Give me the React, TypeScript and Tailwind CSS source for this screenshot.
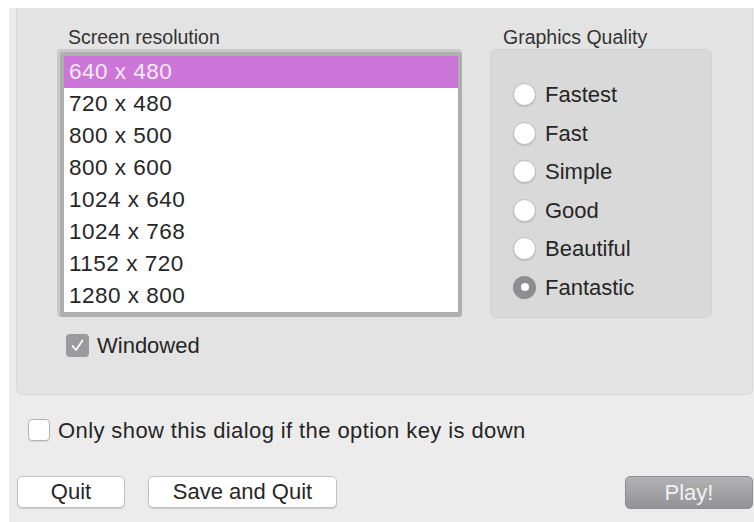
import { useState } from "react";

const resolutions = [
  "640 x 480",
  "720 x 480",
  "800 x 500",
  "800 x 600",
  "1024 x 640",
  "1024 x 768",
  "1152 x 720",
  "1280 x 800",
];

const qualities = ["Fastest", "Fast", "Simple", "Good", "Beautiful", "Fantastic"];

function Radio({ checked }: { checked: boolean }) {
  if (checked) {
    return (
      <span className="flex h-[23px] w-[23px] items-center justify-center rounded-full bg-[#8e8e90]">
        <span className="h-[8px] w-[8px] rounded-full bg-white" />
      </span>
    );
  }
  return (
    <span className="h-[23px] w-[23px] rounded-full border border-[#b9b9b9] bg-white shadow-[0_1px_1px_rgba(0,0,0,0.12)]" />
  );
}

export default function App() {
  const [selected, setSelected] = useState(0);
  const [quality, setQuality] = useState(5);
  const [windowed, setWindowed] = useState(true);
  const [optionOnly, setOptionOnly] = useState(false);

  return (
    <div className="min-h-[522px] bg-white pl-[9px] pt-[8px] font-['Liberation_Sans',Arial,sans-serif] text-[#262626]">
      <div className="flex h-[514px] flex-col bg-[#ececec]">
        <div className="ml-[7px] mr-[1px] flex h-[387px] gap-[28px] rounded-b-[6px] border border-t-0 border-[#d9d9d9] bg-[#e3e3e3] pl-[40px]">
          <div data-element="resolution" className="flex w-[405px] flex-col">
            <div className="h-[41px] pl-[11px] pt-[18px] text-[19.5px] leading-[22px] text-[#333]">
              Screen resolution
            </div>
            <div className="rounded-[4px] bg-[#c9c9c9] pl-[3px] pt-[3px]">
              <div className="rounded-[3px] bg-[#afafaf] pb-[5px] pl-[4px] pr-[4px] pt-[4px]">
                <ul className="bg-white">
                  {resolutions.map((r, i) => (
                    <li
                      key={r}
                      onClick={() => setSelected(i)}
                      className={
                        i === selected
                          ? "h-[32px] bg-[#cb76d8] pl-[5px] text-[22.5px] leading-[32px] tracking-[0.5px] text-[#f7ebf8]"
                          : "h-[32px] pl-[5px] text-[22.5px] leading-[32px] tracking-[0.5px]"
                      }
                    >
                      {r}
                    </li>
                  ))}
                </ul>
              </div>
            </div>
            <label
              className="mt-[17px] flex h-[23px] items-center gap-[8px] pl-[9px] text-[22px]"
              onClick={() => setWindowed(!windowed)}
            >
              {windowed ? (
                <span className="flex h-[23px] w-[23px] items-center justify-center rounded-[4px] bg-[#9b9b9d]">
                  <svg width="15" height="15" viewBox="0 0 15 15" fill="none">
                    <path d="M2.5 8 L6 12 L12.5 2.5" stroke="white" strokeWidth="1.8" strokeLinecap="round" strokeLinejoin="round" />
                  </svg>
                </span>
              ) : (
                <span className="h-[23px] w-[23px] rounded-[4px] border border-[#b5b5b5] bg-white" />
              )}
              Windowed
            </label>
          </div>

          <div data-element="quality" className="flex w-[222px] flex-col">
            <div className="h-[41px] pl-[13px] pt-[18px] text-[19.5px] leading-[22px] text-[#333]">
              Graphics Quality
            </div>
            <div className="flex h-[269px] flex-col gap-[15.5px] rounded-[6px] border border-[#d2d2d2] bg-[#d9d9d9] pl-[22px] pt-[33px]">
              {qualities.map((q, i) => (
                <div
                  key={q}
                  onClick={() => setQuality(i)}
                  className="flex h-[23px] items-center gap-[9px] text-[22px]"
                >
                  <Radio checked={i === quality} />
                  {q}
                </div>
              ))}
            </div>
          </div>
        </div>

        <label
          className="ml-[19px] mt-[24px] flex h-[22px] items-center gap-[8px] text-[22px] tracking-[0.4px]"
          onClick={() => setOptionOnly(!optionOnly)}
        >
          <span className="h-[22px] w-[22px] rounded-[4px] border border-[#b3b3b3] bg-white shadow-[0_1px_1px_rgba(0,0,0,0.08)]" />
          Only show this dialog if the option key is down
        </label>

        <div className="mt-[35px] flex pl-[8px] pr-[1px]">
          <button className="h-[32px] w-[108px] rounded-[5px] border border-[#c3c3c3] bg-white text-[22px] leading-[30px] shadow-[0_1px_1px_rgba(0,0,0,0.15)]">
            Quit
          </button>
          <button className="ml-[23px] h-[32px] w-[189px] rounded-[5px] border border-[#c3c3c3] bg-white text-[22px] leading-[30px] shadow-[0_1px_1px_rgba(0,0,0,0.15)]">
            Save and Quit
          </button>
          <button className="ml-auto h-[33px] w-[128px] rounded-[5px] border border-[#8d8d8f] bg-gradient-to-b from-[#b2b2b4] to-[#939395] text-[22px] leading-[31px] text-[#f2f2f2]">
            Play!
          </button>
        </div>
      </div>
    </div>
  );
}
